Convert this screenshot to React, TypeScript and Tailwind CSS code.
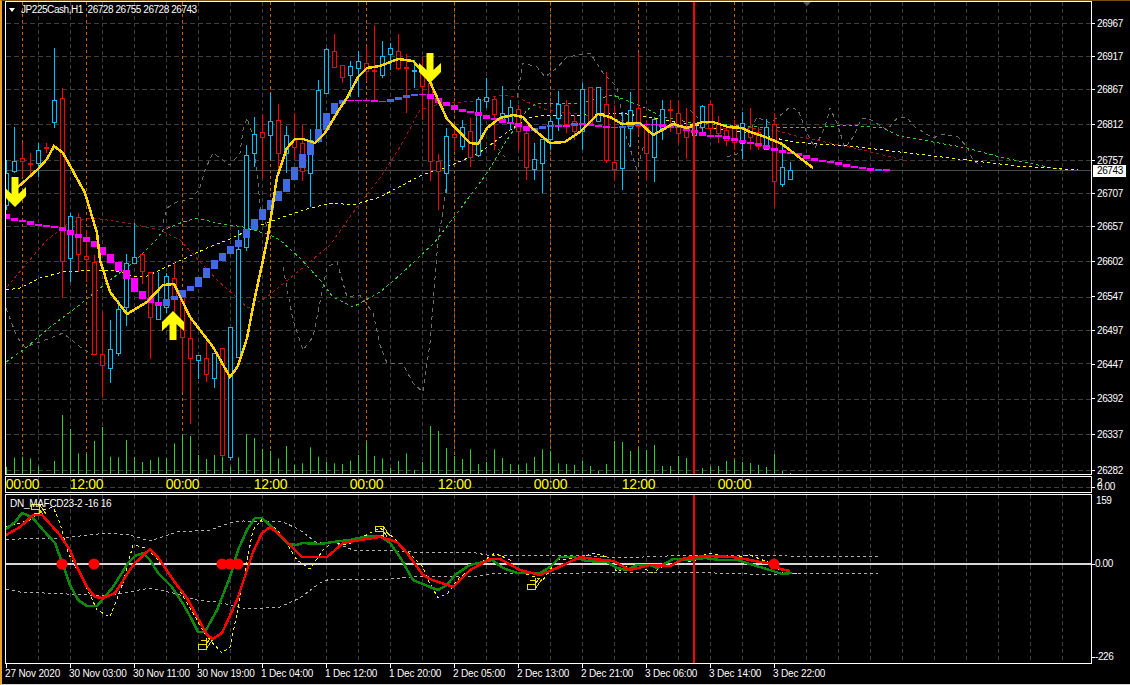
import React from "react";

type P = [number, number];
const pts = (a: P[]) => a.map((p) => p.join(",")).join(" ");

// color, wickTop, wickBottom, bodyTop, bodyBottom; bar i sits at x = 6 + 8i
const candles: [string, number, number, number, number][] = [
  ["c",160,210,173,205],["c",127,173,161,171],["r",142,177,158,161],["r",153,178,163,164],["c",143,177,150,163],["r",143,153,147,148],
  ["c",48,128,100,122],["r",88,297,98,261],["c",213,282,216,258],["r",213,272,217,254],["r",230,282,256,259],["r",255,355,262,354],
  ["r",312,397,354,365],["c",320,383,349,368],["c",300,356,309,353],["c",254,326,263,307],["c",223,264,257,263],["r",254,284,254,271],
  ["r",272,359,272,317],["c",272,319,305,319],["c",273,313,276,307],["r",263,313,278,297],["r",297,392,297,337],["r",320,424,338,358],
  ["c",355,379,355,360],["r",342,382,358,374],["c",353,388,353,378],["r",348,455,348,455],["c",327,460,327,457],["c",230,357,249,357],
  ["c",145,251,155,247],["c",117,167,134,153],["r",114,178,132,137],["c",93,160,121,135],["r",104,170,120,153],["c",126,173,135,153],
  ["r",113,160,140,147],["r",125,181,143,171],["c",129,207,140,173],["c",80,143,90,133],["c",48,93,49,93],["r",34,68,51,67],
  ["r",65,83,65,77],["c",61,97,66,75],["c",51,97,61,68],["r",46,81,63,71],["r",25,100,70,71],["c",41,78,56,75],
  ["c",43,70,48,54],["r",34,70,51,68],["r",54,113,67,68],["c",60,88,70,71],["r",57,120,70,86],["r",80,181,83,161],
  ["r",154,210,161,171],["c",128,193,136,173],["r",125,150,134,137],["c",120,150,127,146],["r",118,167,131,157],["c",97,157,99,155],
  ["c",78,108,97,101],["r",97,150,99,114],["c",86,122,113,119],["c",100,130,107,123],["r",105,150,109,131],["r",127,180,133,167],
  ["c",143,180,159,169],["c",139,193,139,163],["c",118,150,121,139],["c",91,131,104,118],["r",100,133,105,124],["r",115,140,121,131],
  ["c",83,150,89,131],["r",87,125,87,123],["c",87,122,87,121],["r",72,163,104,160],["r",105,180,162,169],["c",112,190,127,168],
  ["c",92,147,110,128],["r",53,135,108,126],["r",120,180,127,153],["c",117,182,119,157],["c",100,140,109,128],["r",100,132,109,110],
  ["r",100,143,113,133],["r",108,159,128,137],["c",118,143,123,135],["c",105,135,106,127],["r",100,135,104,128],["r",116,143,123,133],
  ["r",127,146,130,140],["r",120,150,127,142],["c",112,159,123,143],["r",108,150,127,137],["r",127,150,132,146],["c",119,150,127,149],
  ["r",113,207,124,181],["c",145,187,167,184],["c",162,180,170,179],
];

const volumes = [680,653,650,655,678,702,663,525,567,640,642,603,561,650,652,600,651,666,660,652,655,610,583,588,645,657,645,650,680,652,582,594,627,632,655,618,675,670,622,650,665,670,672,662,645,606,648,655,684,663,640,690,666,558,573,624,648,657,628,672,666,628,654,672,675,670,651,628,634,670,672,675,663,678,693,672,603,606,633,627,630,615,678,678,648,654,678,684,678,678,663,660,666,670,675];
const volumeTail = [463,465,467,454,471,473];

// top, bottom, blue flag; bar i sits at x = 6 + 8i
const blocks: [number, number, number][] = [
  [214,219,0],[218,221,0],[220,222,0],[221,225,0],[224,226,0],[225,227,0],[226,228,0],[227,231,0],[230,235,0],[234,238,0],[237,242,0],[241,247,0],
  [247,255,0],[254,263,0],[262,271,0],[270,279,0],[278,292,0],[291,299,0],[298,303,0],[302,306,0],
  [299,306,1],[296,300,1],[290,297,1],[286,291,1],[277,287,1],[268,278,1],[260,269,1],[253,261,1],[246,254,1],[240,247,1],[229,238,1],[219,230,1],
  [209,220,1],[200,210,1],[191,201,1],[179,192,1],[167,180,1],[154,168,1],[141,155,1],[129,142,1],[113,130,1],[103,114,1],[100,104,1],
  [100,101,0],[100,101,0],[100,101,0],[100,102,0],[101,102,0],
  [99,102,1],[97,100,1],[95,98,1],[94,96,1],[94,95,0],[94,99,0],[98,103,0],[102,106,0],[105,110,0],[109,112,0],[111,113,0],[112,116,0],[115,119,0],
  [118,120,0],[119,123,0],[122,124,0],[123,127,0],[126,131,0],[128,131,1],[126,129,1],[125,127,1],[125,127,0],[125,127,0],[123,126,1],[123,125,0],
  [124,126,0],[125,127,0],[126,128,0],[127,128,1],[126,128,1],[125,127,1],[124,126,1],[124,125,0],[124,125,0],[124,127,0],[125,128,0],[125,128,1],
  [126,131,0],[130,133,0],[132,136,0],[135,137,0],[135,137,0],[136,139,0],[138,141,0],[140,143,0],[142,144,0],[143,146,0],[145,149,0],[148,151,0],
  [150,153,0],[152,154,0],[153,156,0],[155,159,0],[158,161,0],[160,162,0],[161,163,0],[162,165,0],[164,167,0],[166,168,0],[167,169,0],[168,171,0],
  [169,171,1],[169,171,0],
];

const gold: P[] = [[17,188],[38,169],[47,159],[54,146],[63,153],[85,193],[97,233],[100,260],[110,292],[127,314],[147,302],[163,285],[174,284],[190,317],[213,347],[230,377],[238,366],[247,338],[255,297],[263,260],[268,236],[277,177],[287,148],[295,139],[303,139],[315,143],[325,133],[337,113],[347,98],[358,77],[367,68],[380,66],[398,59],[413,61],[423,72],[430,82],[447,119],[470,143],[478,144],[487,128],[500,118],[513,115],[523,117],[532,128],[550,143],[565,142],[580,132],[598,114],[610,117],[622,124],[640,123],[653,135],[673,124],[687,128],[702,122],[713,122],[728,127],[742,128],[750,132],[763,136],[782,144],[813,168]];
const yellowMA: P[] = [[6,290],[20,288],[40,278],[63,272],[93,270],[113,270],[133,276],[147,276],[175,263],[207,248],[230,239],[253,228],[283,217],[310,208],[333,203],[353,205],[380,197],[397,188],[422,175],[447,167],[477,154],[493,143],[513,128],[527,118],[547,115],[580,115],[620,113],[647,117],[680,123],[713,128],[760,135],[775,138],[793,142],[817,144],[850,146],[883,150],[917,154],[950,158],[983,162],[1017,166],[1050,168],[1078,170]];
const greenMA: P[] = [[6,362],[27,347],[50,327],[77,307],[110,280],[133,263],[157,239],[163,230],[183,222],[197,218],[217,223],[243,227],[270,235],[280,240],[300,258],[320,280],[333,297],[353,307],[380,292],[400,275],[435,242],[467,200],[487,173],[507,140],[527,110],[537,103],[580,103],[613,95],[643,107],[663,117],[693,123],[760,127],[777,127],[800,128],[823,127],[850,125],[883,128],[897,135],[933,142],[967,148],[1000,157],[1033,164],[1062,170]];
const redMA: P[] = [[7,287],[27,263],[47,240],[70,222],[93,218],[127,223],[160,230],[180,240],[217,280],[248,308],[267,297],[300,270],[330,245],[360,203],[380,178],[400,147],[420,110],[443,103],[480,101],[500,95],[517,97],[527,102],[547,110],[600,117],[650,125],[700,128],[750,128],[778,131],[800,137],[830,143],[863,150],[907,161]];
const graySegments: P[][] = [
  [[6,308],[17,337],[25,347],[40,342],[63,333],[80,347],[93,355]],
  [[163,223],[167,208],[177,202],[193,198],[200,187],[205,170],[213,153],[230,165],[240,153],[243,130],[247,118],[252,133],[258,180],[260,207],[267,227]],
  [[283,267],[293,320],[303,350],[313,337],[327,267],[337,262],[347,297],[360,295],[373,313],[380,345],[387,363],[403,364],[413,383],[423,392],[430,343],[438,240],[442,217],[447,177]],
  [[493,143],[505,157]],
  [[517,97],[523,63],[537,67],[545,77],[557,68],[567,57],[590,53],[603,73],[617,87],[625,133],[637,170],[647,133]],
  [[690,110],[705,125]],
  [[727,157],[740,153],[757,117],[770,123],[783,113],[790,107],[798,110],[807,133],[815,148],[825,127],[830,108],[837,123],[845,148],[853,137],[862,118],[868,118],[887,130],[898,117],[907,118],[915,127],[933,138],[943,134],[958,137],[967,147],[973,160],[982,167]],
];

const oscGreen: P[] = [[6,529],[15,522],[22,513],[32,517],[43,530],[55,543],[63,565],[70,585],[78,600],[87,606],[97,606],[113,587],[128,563],[135,556],[143,553],[150,560],[158,573],[172,587],[182,602],[192,620],[198,632],[205,632],[217,610],[230,577],[238,550],[247,530],[255,518],[262,518],[273,528],[288,544],[297,545],[302,543],[320,544],[333,542],[350,540],[363,537],[380,536],[390,543],[400,557],[413,580],[430,587],[438,590],[447,585],[455,575],[470,565],[492,560],[503,568],[517,573],[540,573],[550,567],[560,557],[573,557],[587,561],[607,562],[617,568],[627,570],[637,565],[650,565],[657,568],[673,559],[687,560],[705,558],[720,560],[737,560],[750,564],[760,567],[770,570],[782,574],[792,573]];
const oscRed: P[] = [[6,535],[20,527],[33,515],[42,515],[60,535],[70,550],[77,567],[87,587],[95,597],[103,598],[115,593],[133,565],[150,549],[160,560],[173,580],[187,598],[207,635],[213,639],[222,633],[237,600],[253,552],[262,533],[270,527],[280,535],[293,548],[302,557],[327,557],[343,543],[360,540],[380,537],[397,542],[407,553],[423,575],[430,579],[453,587],[470,570],[490,559],[500,559],[520,570],[540,575],[557,568],[580,557],[593,559],[613,561],[630,570],[650,565],[670,566],[685,558],[707,556],[733,557],[750,560],[760,562],[773,564],[780,569],[790,571]];
const oscYellow: P[] = [[6,527],[30,520],[43,510],[53,507],[60,523],[68,553],[83,580],[97,610],[110,617],[123,583],[133,545],[147,548],[167,570],[187,603],[207,637],[222,653],[230,647],[237,613],[253,530],[263,518],[280,533],[297,560],[310,569],[323,550],[333,542],[347,545],[380,528],[393,537],[413,557],[423,567],[427,578],[438,598],[448,593],[460,577],[480,563],[495,553],[510,560],[523,573],[543,580],[557,560],[580,558],[593,553],[607,557],[617,572],[633,563],[653,573],[673,559],[693,562],[708,553],[733,558],[750,555],[770,563],[783,573],[798,573]];
const envUp: P[] = [[6,540],[33,538],[60,538],[80,536],[107,533],[130,535],[150,541],[177,532],[210,530],[230,523],[243,521],[283,522],[300,530],[317,543],[333,542],[353,550],[380,550],[413,552],[470,552],[493,556],[580,555],[620,558],[667,556],[750,555],[787,556],[878,557]];
const envDown: P[] = [[6,589],[20,592],[67,594],[107,596],[150,588],[173,593],[197,600],[217,602],[247,609],[280,607],[300,598],[320,583],[330,579],[380,580],[413,577],[480,576],[493,573],[580,573],[680,572],[750,574],[787,574],[795,573],[878,573]];

const gridX = Array.from({ length: 33 }, (_, k) => 38 + 32 * k);
const gridY = [23, 56, 89, 124, 160, 193, 226, 261, 297, 330, 363, 399, 434, 470];
const orangeX = [22, 86, 182, 270, 366, 454, 550, 638, 734];

const priceLabels: [string, number][] = [["26967",23],["26917",56],["26867",89],["26812",124],["26757",160],["26707",193],["26657",226],["26602",261],["26547",296],["26497",330],["26447",364],["26392",398],["26337",434],["26282",470]];
const sessionLabels: [string, number][] = [["00:00",22],["12:00",86],["00:00",182],["12:00",270],["00:00",366],["12:00",454],["00:00",550],["12:00",638],["00:00",734]];
const dateLabels = ["27 Nov 2020","30 Nov 03:00","30 Nov 11:00","30 Nov 19:00","1 Dec 04:00","1 Dec 12:00","1 Dec 20:00","2 Dec 05:00","2 Dec 13:00","2 Dec 21:00","3 Dec 06:00","3 Dec 14:00","3 Dec 22:00"];

const arrowDown = (cx: number, top: number) =>
  `${cx-3.5},${top} ${cx+3.5},${top} ${cx+3.5},${top+17} ${cx+11},${top+10} ${cx+11},${top+19} ${cx},${top+30} ${cx-11},${top+19} ${cx-11},${top+10} ${cx-3.5},${top+17}`;
const arrowUp = (cx: number, top: number) =>
  `${cx},${top} ${cx+11},${top+11} ${cx+11},${top+20} ${cx+3.5},${top+13} ${cx+3.5},${top+29} ${cx-3.5},${top+29} ${cx-3.5},${top+13} ${cx-11},${top+20} ${cx-11},${top+11}`;

function Dashed({ points, color, dash = "3 3" }: { points: P[]; color: string; dash?: string }) {
  return <polyline points={pts(points)} fill="none" stroke={color} strokeWidth={1} strokeDasharray={dash} shapeRendering="crispEdges" />;
}

function Glyph({ x, y, flip }: { x: number; y: number; flip?: boolean }) {
  return (
    <g transform={`translate(${x} ${y}) scale(1 ${flip ? -1 : 1})`} fill="none" stroke="#e4e400" strokeWidth={1} shapeRendering="crispEdges">
      <path d="M0 6 H8 V11 H0 V6 Z" />
      <path d="M8 11 L15 1 M8 7 L12 0 M8 0 V6 M3 2 H8" />
    </g>
  );
}

function AxisLabel({ y, text, tick = true, left = 5 }: { y: number; text: string; tick?: boolean; left?: number }) {
  return (
    <div className="absolute left-0 flex h-[12px] items-center" style={{ top: y - 6 }}>
      <div className={tick ? "h-px w-[3px] bg-white" : "h-px w-[3px]"} />
      <span className="text-[10px] leading-[12px] tracking-[-0.4px] text-white" style={{ marginLeft: left - 3 }}>{text}</span>
    </div>
  );
}

export default function App() {
  const mono = { fontFamily: '"Liberation Sans", sans-serif' };
  return (
    <div className="flex h-[685px] w-[1130px] flex-col overflow-hidden border-t border-b border-l-2 border-t-[#7a5010] border-b-[#d8d8d8] border-l-[#e8a428] bg-black pl-[3px]" style={mono}>
      {/* main chart */}
      <div className="flex h-[474px]">
        <div className="relative h-full w-[1087px] border border-white">
          <svg width={1085} height={472} viewBox="6 2 1085 472" className="block">
            {gridX.map((x) => <line key={x} x1={x + 0.5} x2={x + 0.5} y1={2} y2={474} stroke="#3e3e3e" strokeDasharray="4 3" />)}
            {gridY.map((y) => <line key={y} x1={6} x2={1091} y1={y + 0.5} y2={y + 0.5} stroke="#3e3e3e" strokeDasharray="5 3" />)}
            {orangeX.map((x) => <line key={x} x1={x + 0.5} x2={x + 0.5} y1={2} y2={474} stroke="#c46200" strokeDasharray="3 3" />)}
            <line x1={6} x2={1091} y1={170.5} y2={170.5} stroke="#4a4a4a" />
            {volumes.map((v, i) => <line key={i} x1={6.5 + 8 * i} x2={6.5 + 8 * i} y1={240 + v / 3} y2={474} stroke="#32cd32" />)}
            {volumeTail.map((y, i) => <line key={i} x1={750.5 + 8 * i} x2={750.5 + 8 * i} y1={y} y2={474} stroke="#32cd32" />)}
            {graySegments.map((s, i) => <Dashed key={i} points={s} color="#6e6e6e" dash="4 4" />)}
            <Dashed points={redMA} color="#a01818" />
            <Dashed points={greenMA} color="#32cd32" />
            <Dashed points={yellowMA} color="#ffff00" />
            {candles.map(([c, wt, wb, bt, bb], i) => {
              const x = 6 + 8 * i;
              const col = c === "c" ? "#00bfff" : "#ff0000";
              return (
                <g key={i}>
                  <line x1={x + 0.5} x2={x + 0.5} y1={wt} y2={wb} stroke={col} />
                  <rect x={x - 1.5} y={bt + 0.5} width={4} height={Math.max(bb - bt, 1)} fill="#000" stroke={col} />
                </g>
              );
            })}
            {blocks.map(([t, b, blue], i) => <rect key={i} x={3 + 8 * i} y={t} width={7} height={b - t} fill={blue ? "#4169e1" : "#ff00ff"} />)}
            <polyline points={pts(gold)} fill="none" stroke="#ffd700" strokeWidth={2.5} shapeRendering="crispEdges" />
            <polygon points={arrowDown(15, 177)} fill="#ffff00" />
            <polygon points={arrowDown(430, 53)} fill="#ffff00" />
            <polygon points={arrowUp(173, 311)} fill="#ffff00" />
            <polygon points="803,2 811,2 807,6" fill="#555555" />
            <rect x={693} y={2} width={2} height={472} fill="#ff0000" />
          </svg>
          <div className="absolute left-[3px] top-[6px] h-0 w-0 border-x-[3.5px] border-t-[4px] border-x-transparent border-t-white" />
          <div className="absolute left-[15px] top-[2px] whitespace-pre text-[10px] leading-[12px] tracking-[-0.45px] text-white">JP225Cash,H1  26728 26755 26728 26743</div>
        </div>
        <div className="relative flex-1">
          {priceLabels.map(([t, y]) => <AxisLabel key={t} y={y - 0.5} text={t} />)}
          <div className="absolute left-[1px] top-[164px] h-[12px] w-[33px] bg-white pl-[4px] text-[10px] leading-[12px] tracking-[-0.4px] text-black">26743</div>
        </div>
      </div>
      {/* session panel */}
      <div className="mt-px flex h-[17px]">
        <div className="relative h-full w-[1087px] border border-white">
          <svg width={1085} height={15} viewBox="6 477 1085 15" className="block">
            {gridX.map((x) => <line key={x} x1={x + 0.5} x2={x + 0.5} y1={477} y2={492} stroke="#3e3e3e" strokeDasharray="4 3" />)}
            <line x1={6} x2={1091} y1={487.5} y2={487.5} stroke="#3e3e3e" strokeDasharray="5 3" />
          </svg>
          {sessionLabels.map(([t, x]) => (
            <span key={x} className="absolute top-0 w-[40px] text-center text-[14px] leading-[15px] tracking-[-0.3px] text-[#ffff00]" style={{ left: x - 6 - 20 + 0.5 }}>{t}</span>
          ))}
        </div>
        <div className="relative flex-1">
          <AxisLabel y={7} text="2" tick={false} />
          <AxisLabel y={11} text="0.00" />
        </div>
      </div>
      {/* oscillator */}
      <div className="mt-px flex h-[170px]">
        <div className="relative h-full w-[1087px] border border-white">
          <svg width={1085} height={168} viewBox="6 495 1085 168" className="block">
            {gridX.map((x) => <line key={x} x1={x + 0.5} x2={x + 0.5} y1={495} y2={663} stroke="#3e3e3e" strokeDasharray="4 3" />)}
            <Dashed points={envUp} color="#b0b0b0" />
            <Dashed points={envDown} color="#b0b0b0" />
            <rect x={6} y={563} width={1085} height={2} fill="#d8d8d8" />
            <Dashed points={oscYellow} color="#ffff00" />
            <Glyph x={31} y={515} flip />
            <Glyph x={375} y={537} flip />
            <Glyph x={198} y={638} />
            <Glyph x={527} y={578} />
            <polyline points={pts(oscGreen)} fill="none" stroke="#0a8a0a" strokeWidth={2.5} shapeRendering="crispEdges" />
            <polyline points={pts(oscRed)} fill="none" stroke="#ff0000" strokeWidth={2.5} shapeRendering="crispEdges" />
            {[62, 94, 222, 230, 238, 774].map((x) => <circle key={x} cx={x} cy={564} r={5.5} fill="#ff0000" />)}
            <rect x={693} y={495} width={2} height={168} fill="#ff0000" />
          </svg>
          <div className="absolute left-[4px] top-[3px] whitespace-pre text-[10px] leading-[12px] tracking-[-0.28px] text-white">DN_MAFCD23-2 -16 16</div>
        </div>
        <div className="relative flex-1">
          <AxisLabel y={7} text="159" tick={false} left={4} />
          <AxisLabel y={70} text="0.00" left={3} />
          <AxisLabel y={163} text="-226" left={3} />
        </div>
      </div>
      {/* date axis */}
      <div className="flex h-[20px]">
        {dateLabels.map((d) => (
          <div key={d} className="w-[64px] shrink-0">
            <div className="ml-px h-[4px] w-px bg-white" />
            <div className="whitespace-nowrap text-[10px] leading-[11px] tracking-[-0.15px] text-white">{d}</div>
          </div>
        ))}
      </div>
    </div>
  );
}
